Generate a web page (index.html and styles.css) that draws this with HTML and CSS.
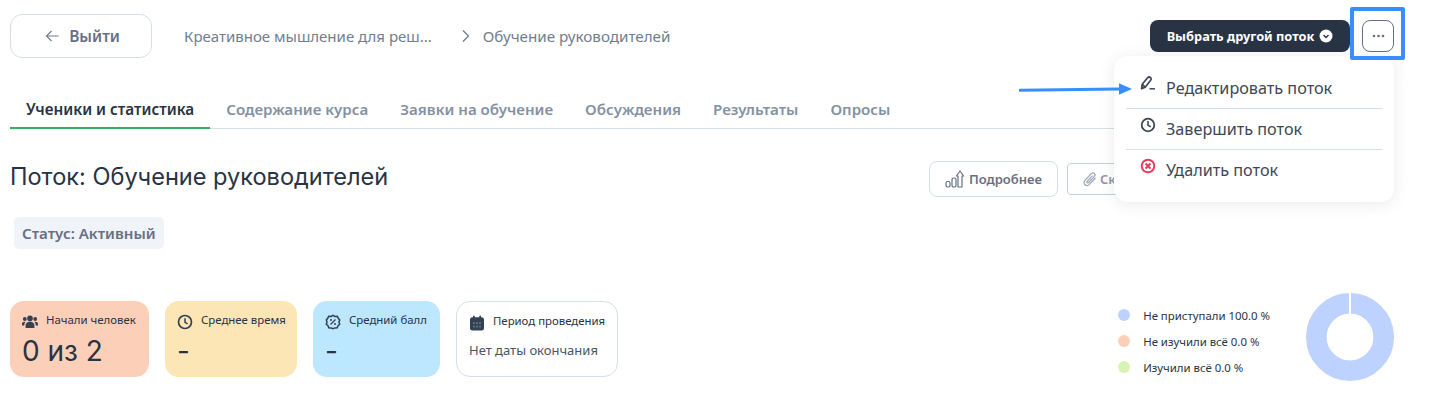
FILE: index.html
```html
<!DOCTYPE html>
<html lang="ru">
<head>
<meta charset="utf-8">
<title>Поток</title>
<link rel="stylesheet" href="styles.css">
</head>
<body>
<div class="page">
  <header class="topbar">
    <button class="exit">
      <svg class="exit-icon" viewBox="0 0 14 14" width="14" height="14"><path d="M13.500 7H1.500M6.500 2 1.500 7l5 5" fill="none" stroke="#717d8f" stroke-width="1.200"/></svg>
      <span>Выйти</span>
    </button>
    <nav class="crumbs">
      <span class="crumb-first">Креативное мышление для реш...</span>
      <svg class="crumb-sep" viewBox="0 0 8 14" width="8" height="14"><path d="M1 1.500 6.500 7 1 12.500" fill="none" stroke="#6b7686" stroke-width="1.200"/></svg>
      <span class="crumb-last">Обучение руководителей</span>
    </nav>
    <div class="top-actions">
      <button class="select-stream">
        <span>Выбрать другой поток</span>
        <svg viewBox="0 0 14 14" width="14" height="14"><circle cx="7" cy="7" r="6.500" fill="#fff"/><path d="M4.500 6 7 8.500 9.500 6" fill="none" stroke="#283343" stroke-width="1.400"/></svg>
      </button>
      <button class="more">
        <svg viewBox="0 0 13 4" width="13" height="4"><circle cx="2" cy="2" r="1.300" fill="#667085"/><circle cx="6.500" cy="2" r="1.300" fill="#667085"/><circle cx="11" cy="2" r="1.300" fill="#667085"/></svg>
      </button>
    </div>
  </header>

  <div class="tabs">
    <a class="tab active">Ученики и статистика</a>
    <a class="tab">Содержание курса</a>
    <a class="tab">Заявки на обучение</a>
    <a class="tab">Обсуждения</a>
    <a class="tab">Результаты</a>
    <a class="tab">Опросы</a>
  </div>

  <section class="head">
    <h1 class="title">Поток: Обучение руководителей</h1>
    <div class="head-actions">
      <button class="btn-more">
        <svg viewBox="0 0 20 20" width="20" height="20"><g fill="none" stroke="#667085" stroke-width="1.200"><rect x="1" y="12.500" width="4" height="5.500" rx="1.400"/><rect x="7" y="9" width="4" height="9" rx="1.400"/><path d="M13 18V7h-1.600L15 2l3.600 5H17v11z" stroke-linejoin="round"/></g></svg>
        <span>Подробнее</span>
      </button>
      <button class="btn-download">
        <svg viewBox="0 0 16 18" width="16" height="18"><path d="M13.500 8 7.600 14.200c-1.400 1.500-3.400 1.600-4.600.5-1.300-1.200-1.200-3.100.2-4.600l6-6.400c1-1 2.300-1.100 3.200-.3.900.9.800 2.200-.2 3.200L6.600 12.500c-.5.500-1.100.6-1.500.2-.4-.4-.3-1 .2-1.500L10.500 5.600" fill="none" stroke="#9aa6b5" stroke-width="1.200"/></svg>
        <span>Скачать</span>
      </button>
    </div>
  </section>

  <div class="status">Статус: Активный</div>

  <section class="bottom">
    <div class="cards">
      <article class="card card-red">
        <div class="card-label">
          <svg viewBox="0 0 16 14" width="16" height="14"><g fill="#344054"><circle cx="8" cy="3.400" r="2.800"/><circle cx="2.800" cy="4" r="1.900"/><circle cx="13.200" cy="4" r="1.900"/><path d="M3.600 13v-2.400C3.600 8 5.400 6.800 8 6.800s4.400 1.200 4.400 3.800V13z"/><path d="M0 10.500V8.800C0 7.500 1 6.800 2.800 6.800l.7.100C2.600 7.800 2.300 9 2.300 10.500zM16 10.500V8.800c0-1.300-1-2-2.800-2l-.7.100c.9.900 1.200 2.100 1.200 3.600z"/></g></svg>
          <span>Начали человек</span>
        </div>
        <div class="card-value">0 из 2</div>
      </article>
      <article class="card card-yellow">
        <div class="card-label">
          <svg viewBox="0 0 16 16" width="16" height="16"><circle cx="8" cy="8" r="6.500" fill="none" stroke="#344054" stroke-width="1.700"/><path d="M8 4.200V8.300l2.600 1.500" fill="none" stroke="#344054" stroke-width="1.500"/></svg>
          <span>Среднее время</span>
        </div>
        <div class="card-value">-</div>
      </article>
      <article class="card card-blue">
        <div class="card-label">
          <svg viewBox="0 0 16 16" width="16" height="16"><path d="M8 1.300 10 2.400l2.300-.1 1 2 1.400 1.700-.7 2.100.7 2.100-1.700 1.500-.8 2.100-2.300.1L8 14.700l-1.900-.8-2.300-.1-.8-2.100-1.700-1.500.7-2.100-.7-2.100L2.700 4.300l1-2 2.300.1z" fill="none" stroke="#344054" stroke-width="1.500"/><path d="M5.500 10.500l5-5" stroke="#344054" stroke-width="1.200"/><circle cx="6" cy="6" r="1" fill="#344054"/><circle cx="10" cy="10" r="1" fill="#344054"/></svg>
          <span>Средний балл</span>
        </div>
        <div class="card-value">-</div>
      </article>
      <article class="card card-white">
        <div class="card-label">
          <svg viewBox="0 0 16 16" width="16" height="16"><rect x="1" y="2.200" width="14" height="13.300" rx="2.500" fill="#344054"/><rect x="4" y=".5" width="1.600" height="3" rx=".8" fill="#344054"/><rect x="10.400" y=".5" width="1.600" height="3" rx=".8" fill="#344054"/><g fill="#5d6a7d"><rect x="4" y="7" width="2" height="2"/><rect x="7" y="7" width="2" height="2"/><rect x="10" y="7" width="2" height="2"/><rect x="4" y="10.500" width="2" height="2"/><rect x="7" y="10.500" width="2" height="2"/><rect x="10" y="10.500" width="2" height="2"/></g></svg>
          <span>Период проведения</span>
        </div>
        <div class="card-text">Нет даты окончания</div>
      </article>
    </div>
    <div class="chart">
      <ul class="legend">
        <li><i class="dot dot-blue"></i>Не приступали 100.0 %</li>
        <li><i class="dot dot-orange"></i>Не изучили всё 0.0 %</li>
        <li><i class="dot dot-green"></i>Изучили всё 0.0 %</li>
      </ul>
      <svg class="donut" viewBox="0 0 88 88" width="88" height="88"><circle cx="44" cy="44" r="33.700" fill="none" stroke="#bdd2ff" stroke-width="20.600"/><rect x="43" y="0" width="2" height="21" fill="#fff"/></svg>
    </div>
  </section>
</div>

<div class="menu">
  <div class="menu-item">
    <svg viewBox="0 0 16 16" width="16" height="16"><path d="M1.600 12.600 2.200 8.200 7.600 1.800c.8-.9 1.900-1 2.800-.3.900.7.900 1.900.2 2.700L5.200 11.300z M2.200 8.200 5.200 11.300" fill="none" stroke="#3d4756" stroke-width="1.700" stroke-linejoin="round"/><path d="M9.500 12.800h5.500" stroke="#3d4756" stroke-width="1.500"/></svg>
    <span>Редактировать поток</span>
  </div>
  <div class="menu-item">
    <svg viewBox="0 0 16 16" width="16" height="16"><circle cx="8" cy="8" r="6.300" fill="none" stroke="#3d4756" stroke-width="1.800"/><path d="M8 4V8.300l2.800 1.600" fill="none" stroke="#3d4756" stroke-width="1.600"/></svg>
    <span>Завершить поток</span>
  </div>
  <div class="menu-item">
    <svg viewBox="0 0 16 16" width="16" height="16"><circle cx="8" cy="8" r="6.300" fill="none" stroke="#ea3a5c" stroke-width="1.900"/><path d="M5.500 5.500l5 5M10.500 5.500l-5 5" stroke="#ea3a5c" stroke-width="2"/></svg>
    <span>Удалить поток</span>
  </div>
</div>

<div class="highlight"></div>

<svg class="arrow" viewBox="0 0 114 14" width="114" height="14"><path d="M1 8.200 100 7" stroke="#3a8dff" stroke-width="3" stroke-linecap="round" fill="none"/><path d="M100 1.200 113 7l-13 5.800z" fill="#3a8dff"/></svg>
</body>
</html>
```
FILE: styles.css
```css
* { box-sizing: border-box; }
html, body { margin: 0; padding: 0; height: 407px; overflow: hidden; background: #fff; }
body { font-family: "Noto Sans", sans-serif; color: #283343; position: relative; }
button { font-family: inherit; cursor: pointer; }

.page { padding: 14px 45px 0 10px; }

.topbar { display: flex; align-items: center; height: 44px; }
.exit {
  width: 142px; height: 44px; display: flex; align-items: center; justify-content: center; gap: 10px;
  padding: 0 0 0 3px;
  background: #fff; border: 1px solid #d5deea; border-radius: 12px;
  color: #667085; font-size: 15.500px; font-weight: 600;
}
.exit-icon { margin-top: -1px; }
.crumbs { display: flex; align-items: center; margin-left: 32px; font-size: 15px; color: #717d8f; }
.crumb-sep { margin: 0 13px 0 30px; }
.crumb-last { font-size: 15.200px; }
.top-actions { margin-left: auto; display: flex; align-items: center; gap: 12px; }
.select-stream {
  width: 200px; height: 32px; display: flex; align-items: center; justify-content: center; gap: 5px;
  background: #283343; color: #fff; border: 0; border-radius: 8px;
  font-size: 12.800px; font-weight: 700;
}
.more {
  width: 32px; height: 32px; display: flex; align-items: center; justify-content: center;
  background: #fff; border: 1px solid #667085; border-radius: 8px; padding: 0;
}

.tabs { display: flex; margin-top: 29px; height: 42px; border-bottom: 1px solid #d5deea; }
.tab { padding: 12px 16px 0; font-size: 15.100px; font-weight: 600; color: #8491a3; white-space: nowrap; }
.tab.active { color: #283343; font-size: 15.250px; border-bottom: 2px solid #34ae5f; height: 42px; }

.head { display: flex; align-items: center; justify-content: space-between; margin-top: 32px; height: 36px; }
.title { margin: 0 0 6px; font-family: "Inter", sans-serif; font-size: 23.550px; font-weight: 400; color: #283343; white-space: nowrap; }
.head-actions { display: flex; align-items: center; gap: 9px; width: 465px; }
.btn-more {
  width: 129px; height: 36px; display: flex; align-items: center; justify-content: center; gap: 4px;
  background: #fff; border: 1px solid #d5deea; border-radius: 8px; color: #667085;
  font-size: 13px; font-weight: 600; padding: 0;
}
.btn-download {
  width: 110px; height: 32px; display: flex; align-items: center; gap: 2px; padding: 0 0 0 14px;
  background: #fff; border: 1px solid #c3cfdd; border-radius: 4px; color: #8d99a9;
  font-size: 13px; font-weight: 600;
}

.status {
  display: inline-block; margin: 20px 0 0 4px; height: 32px; padding: 0 8px; line-height: 32px;
  background: #f0f4f9; border-radius: 5px; color: #667085; font-size: 15.100px; font-weight: 600;
}

.bottom { display: flex; justify-content: space-between; margin-top: 52px; }
.cards { display: flex; gap: 16px; }
.card { height: 76px; border-radius: 14px; padding: 11px 12px; }
.card-red { width: 139px; background: #fccfb9; }
.card-yellow { width: 132px; background: #fde6b6; }
.card-blue { width: 127px; background: #bce7ff; }
.card-white { width: 162px; background: #fff; border: 1px solid #d5deea; }
.card-label { display: flex; align-items: center; gap: 8px; font-size: 11.400px; color: #283343; height: 16px; white-space: nowrap; }
.card-label svg { flex: none; margin-top: 3px; }
.card-label span { margin-top: -1px; }
.card-value { font-family: "Inter", sans-serif; font-size: 28px; line-height: 36px; margin-top: 5px; color: #283343; }
.card-text { font-size: 13px; margin-top: 12px; color: #4a5462; white-space: nowrap; }

.chart { display: flex; align-items: center; margin-top: -8px; height: 88px; }
.legend { list-style: none; margin: 8px 36px 0 0; padding: 0; display: flex; flex-direction: column; gap: 10px; }
.legend li { display: flex; align-items: center; height: 16px; font-size: 11.400px; color: #283343; white-space: nowrap; }
.dot { width: 12px; height: 12px; border-radius: 50%; margin-right: 13px; }
.dot-blue { background: #bdd2ff; }
.dot-orange { background: #fccfb9; }
.dot-green { background: #d6f5b5; }

.highlight { position: absolute; left: 1350px; top: 7px; width: 55px; height: 53px; border: 4px solid #3a8dff; border-radius: 2px; pointer-events: none; }
.arrow { position: absolute; left: 1019px; top: 82px; }

.menu {
  position: absolute; left: 1114px; top: 56px; width: 280px; height: 146px; padding: 12px;
  background: #fff; border-radius: 14px; box-shadow: 0 2px 16px rgba(40, 51, 67, .1);
}
.menu-item {
  display: flex; gap: 10px; height: 41px; padding: 6px 0 0 14px; font-size: 16.200px; color: #3d4756;
  border-bottom: 1px solid #d5deea;
}
.menu-item:last-child { border-bottom: 0; }
.menu-item svg { flex: none; margin-top: 2px; }
.menu-item span { margin-top: 3px; }
```
